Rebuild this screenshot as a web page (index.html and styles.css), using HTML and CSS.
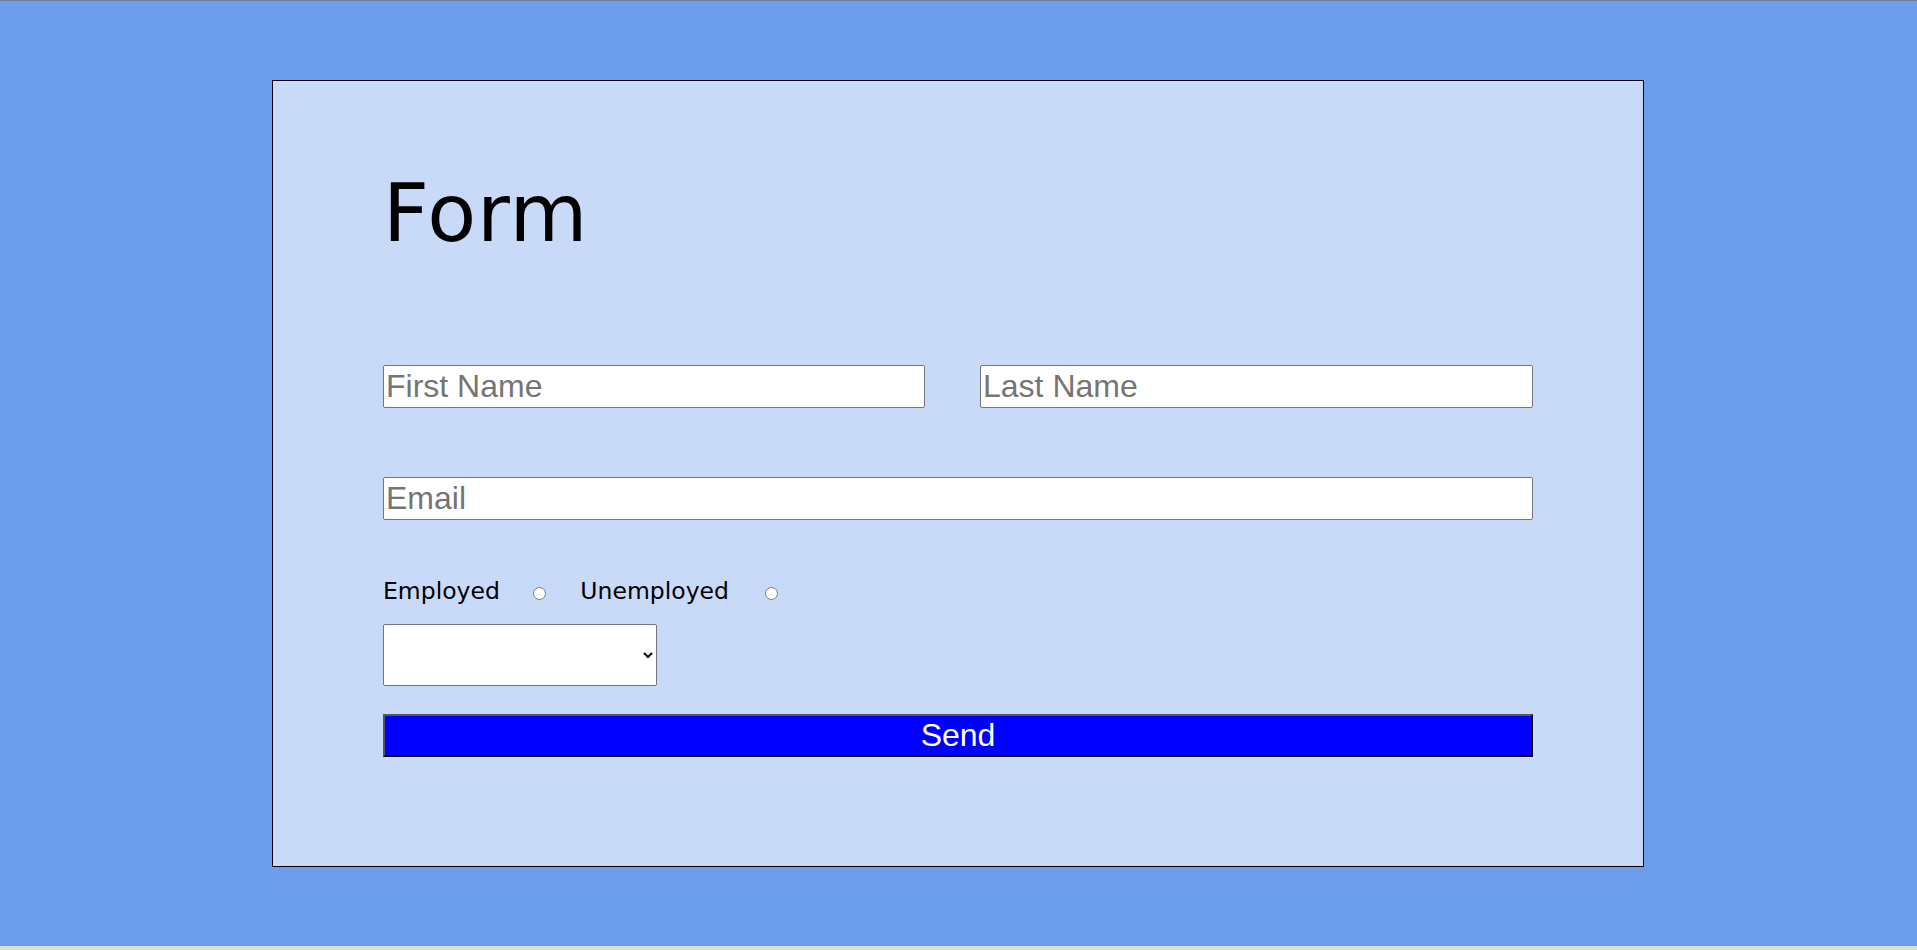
FILE: index.html
```html
<!DOCTYPE html>
<html lang="en">
<head>
<meta charset="utf-8">
<title>Form</title>
<link rel="stylesheet" href="styles.css">
</head>
<body>
<div class="page">
  <form class="card">
    <h1 class="title">Form</h1>
    <div class="name-row">
      <input class="field field-first" type="text" placeholder="First Name">
      <input class="field field-last" type="text" placeholder="Last Name">
    </div>
    <input class="field field-email" type="email" placeholder="Email">
    <div class="status-row">
      <label class="status-label" for="employed">Employed</label>
      <input class="radio radio-first" type="radio" id="employed" name="status">
      <label class="status-label" for="unemployed">Unemployed</label>
      <input class="radio radio-second" type="radio" id="unemployed" name="status">
    </div>
    <select class="choice">
      <option></option>
    </select>
    <button class="send" type="button">Send</button>
  </form>
</div>
</body>
</html>
```

FILE: styles.css
```css
html {
  background: #dcdcdc;
}

body {
  margin: 0;
  height: 950px;
  overflow: hidden;
}

.page {
  height: 946px;
  box-sizing: border-box;
  border-top: 1px solid #6e7f98;
  background: #6d9eeb;
  padding-top: 79px;
}

.card {
  width: 1372px;
  height: 787px;
  box-sizing: border-box;
  margin-left: 272px;
  background: #c9daf8;
  border: 1px solid #000;
  padding: 86px 110px 0;
  display: flex;
  flex-direction: column;
  align-items: flex-start;
}

.title {
  margin: 0;
  font-family: "DejaVu Sans", Verdana, sans-serif;
  font-size: 80px;
  line-height: 93px;
  letter-spacing: 1px;
  font-weight: normal;
  color: #000;
}

.name-row {
  margin-top: 105px;
  width: 1150px;
  display: flex;
  justify-content: space-between;
}

.field {
  height: 43px;
  box-sizing: border-box;
  margin: 0;
  padding: 1px 2px;
  border: 1px solid #767676;
  border-radius: 2px;
  background: #fff;
  font-family: "Liberation Sans", Arial, sans-serif;
  font-size: 32px;
  color: #000;
}

.field::placeholder {
  color: #757575;
}

.field-first {
  width: 542px;
}

.field-last {
  width: 553px;
}

.field-email {
  margin-top: 69px;
  width: 1150px;
}

.status-row {
  margin-top: 58px;
  height: 27px;
  display: flex;
  align-items: center;
}

.status-label {
  font-family: "DejaVu Sans", Verdana, sans-serif;
  font-size: 23.5px;
  line-height: 27px;
  color: #000;
}

.radio {
  width: 13px;
  height: 13px;
  margin: 4px 0 0 0;
}

.radio-first {
  margin-left: 33.5px;
  margin-right: 34px;
}

.radio-second {
  margin-left: 36px;
}

.choice {
  margin-top: 19px;
  width: 274px;
  height: 62px;
  box-sizing: border-box;
  border: 1px solid #767676;
  border-radius: 2px;
  background: #fff;
  font-family: "Liberation Sans", Arial, sans-serif;
  font-size: 16px;
}

.send {
  margin-top: 28px;
  width: 1150px;
  height: 43px;
  box-sizing: border-box;
  padding: 0;
  background: #0000ff;
  border-style: solid;
  border-width: 2px;
  border-color: #565656 #000 #000 #565656;
  color: #fff;
  font-family: "Liberation Sans", Arial, sans-serif;
  font-size: 32px;
  line-height: 37px;
}
```
